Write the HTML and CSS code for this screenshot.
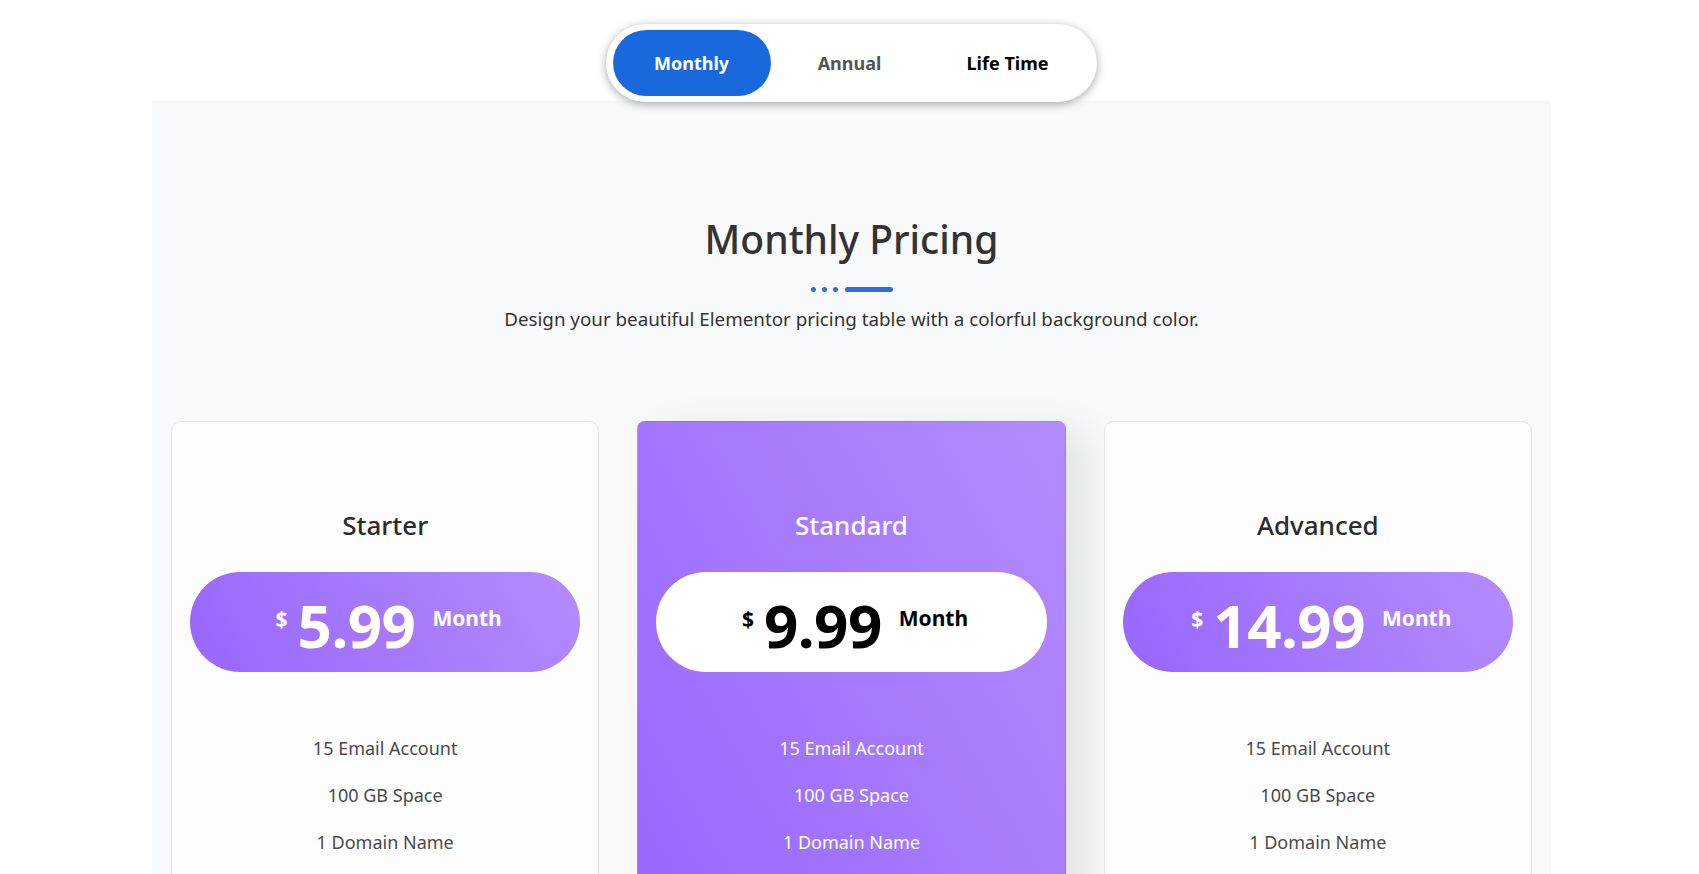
FILE: index.html
```html
<!DOCTYPE html>
<html lang="en">
<head>
  <meta charset="UTF-8">
  <title>Pricing Table</title>
  <link rel="stylesheet" href="styles.css">
</head>
<body>

  <div class="switch-wrap">
    <div class="switch">
      <button class="switch-btn active">Monthly</button>
      <button class="switch-btn annual">Annual</button>
      <button class="switch-btn lifetime">Life Time</button>
    </div>
  </div>

  <section class="pricing">
    <div class="pricing-head">
      <h2>Monthly Pricing</h2>
      <div class="divider">
        <span class="dot"></span>
        <span class="dot"></span>
        <span class="dot"></span>
        <span class="line"></span>
      </div>
      <p>Design your beautiful Elementor pricing table with a colorful background color.</p>
    </div>

    <div class="plans">
      <div class="col">
        <div class="plan">
          <h3>Starter</h3>
          <div class="price">
            <span class="currency">$</span>
            <span class="amount">5.99</span>
            <span class="period">Month</span>
          </div>
          <ul class="features">
            <li>15 Email Account</li>
            <li>100 GB Space</li>
            <li>1 Domain Name</li>
          </ul>
        </div>
      </div>

      <div class="col">
        <div class="plan featured">
          <h3>Standard</h3>
          <div class="price">
            <span class="currency">$</span>
            <span class="amount">9.99</span>
            <span class="period">Month</span>
          </div>
          <ul class="features">
            <li>15 Email Account</li>
            <li>100 GB Space</li>
            <li>1 Domain Name</li>
          </ul>
        </div>
      </div>

      <div class="col">
        <div class="plan">
          <h3>Advanced</h3>
          <div class="price">
            <span class="currency">$</span>
            <span class="amount">14.99</span>
            <span class="period">Month</span>
          </div>
          <ul class="features">
            <li>15 Email Account</li>
            <li>100 GB Space</li>
            <li>1 Domain Name</li>
          </ul>
        </div>
      </div>
    </div>
  </section>

</body>
</html>
```

FILE: styles.css
```css
body {
  font-family: "Noto Sans", "Open Sans", sans-serif;
  margin: 0;
  padding: 0;
  background: #fff;
  color: #333;
  overflow: hidden;
}

/* Period switch */
.switch-wrap {
  display: flex;
  justify-content: center;
  padding: 24px 0 0 3px;
  position: relative;
  z-index: 1;
}

.switch {
  display: flex;
  padding: 6px 10px 6px 7px;
  background: #fff;
  border-radius: 40px;
  box-shadow: 0 2px 10px rgba(0,0,0,0.35);
}

.switch-btn {
  width: 158px;
  height: 66px;
  border: none;
  border-radius: 33px;
  background: transparent;
  font-family: inherit;
  font-size: 18px;
  font-weight: 700;
  color: #000;
  cursor: pointer;
}

.switch-btn.active {
  background: #1a69dc;
  color: #fff;
}

.switch-btn.annual {
  color: #555;
}

/* Section */
.pricing {
  max-width: 1399px;
  margin: -1px auto 0;
  position: relative;
  left: 2px;
  background: #f8f9fa;
  padding-top: 114px;
}

.pricing-head {
  text-align: center;
}

.pricing-head h2 {
  margin: 0;
  font-size: 39px;
  font-weight: 500;
  line-height: 48px;
  color: #333;
}

.divider {
  display: flex;
  justify-content: center;
  align-items: center;
  gap: 6px;
  margin-top: 24px;
}

.divider .dot {
  width: 5px;
  height: 5px;
  border-radius: 50%;
  background: #2a6ee2;
}

.divider .line {
  width: 48px;
  height: 5px;
  margin-left: 1px;
  border-radius: 3px;
  background: #2a6ee2;
}

.pricing-head p {
  margin: 14px 0 0;
  font-size: 18.8px;
  line-height: 27px;
  color: #333;
}

/* Plans */
.plans {
  display: flex;
  margin-top: 88px;
}

.col {
  flex: 1;
  padding: 0 19px;
}

.plan {
  background: #fdfdfe;
  border: 1px solid #e6e7ea;
  border-radius: 10px;
  padding: 88px 18px 60px;
  text-align: center;
}

.plan h3 {
  margin: 0;
  font-size: 26px;
  font-weight: 500;
  line-height: 31px;
  color: #2b2b2b;
}

.price {
  display: flex;
  justify-content: center;
  align-items: flex-start;
  height: 100px;
  box-sizing: border-box;
  padding: 23px 0 0 7px;
  margin-top: 31px;
  border-radius: 50px;
  background: linear-gradient(60deg, #9866fc 0%, #b38cfd 100%);
  color: #fff;
  font-weight: 700;
}

.currency {
  font-size: 21px;
  line-height: 1;
  margin-top: 14px;
}

.amount {
  font-size: 60px;
  line-height: 60px;
  margin: 0 17px 0 10px;
  letter-spacing: -0.5px;
}

.period {
  font-size: 21px;
  line-height: 1;
  margin-top: 13px;
}

.features {
  list-style: none;
  margin: 53px 0 0;
  padding: 0;
}

.features li {
  font-size: 18px;
  line-height: 47px;
  color: #4a4a4a;
}

/* Highlighted plan */
.plan.featured {
  border-color: transparent;
  border-radius: 8px;
  background: linear-gradient(60deg, #9866fc 0%, #b38cfd 100%);
  box-shadow: 22px 10px 40px rgba(0,0,0,0.09);
  position: relative;
}

.plan.featured h3 {
  color: #fff;
}

.plan.featured .price {
  background: #fff;
  color: #000;
}

.plan.featured .features li {
  color: #fff;
}

.col:last-child {
  position: relative;
}
```
